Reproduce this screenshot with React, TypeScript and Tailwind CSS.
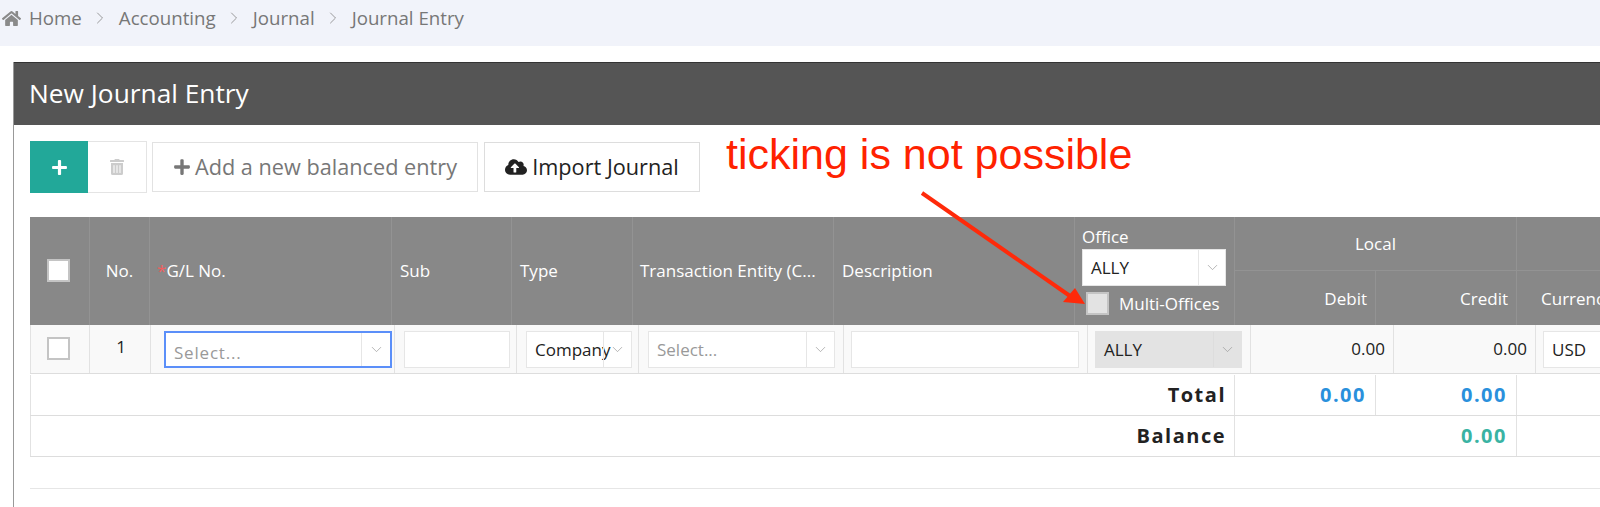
import { ChevronDown, ChevronRight } from "lucide-react";
import { FaCloudUploadAlt, FaHome, FaPlus, FaTrashAlt } from "react-icons/fa";

const Crumb = ({ label, last }: { label: string; last?: boolean }) => (
  <>
    <span>{label}</span>
    {!last && <ChevronRight size={20} strokeWidth={1} className="mx-[8.5px] text-[#888]" />}
  </>
);

const Select = ({
  value,
  placeholder,
  className,
  textClassName = "",
  arrowWidth = "w-[28px]",
}: {
  value?: string;
  placeholder?: string;
  className: string;
  textClassName?: string;
  arrowWidth?: string;
}) => (
  <div className={`flex h-[37px] items-stretch border border-[#e6e6e6] bg-white ${className}`}>
    <div className={`min-w-0 flex-1 overflow-visible whitespace-nowrap pl-[8px] text-[17px] leading-[35px] ${value ? "text-[#222]" : "text-[#999]"} ${textClassName}`}>
      {value ?? placeholder}
    </div>
    <div className={`flex shrink-0 items-center justify-center border-l border-[#e6e6e6] ${arrowWidth}`}>
      <ChevronDown size={17} strokeWidth={1} className="text-[#999]" />
    </div>
  </div>
);

const Checkbox = ({ className }: { className: string }) => (
  <div className={`h-[23px] w-[23px] border-2 border-[#c4c4c4] ${className}`} />
);

const App = () => {
  return (
    <div className="relative h-[507px] w-[1600px] overflow-hidden bg-white font-['Open_Sans',sans-serif]">
      <div className="flex h-[46px] items-center bg-[#f1f3fa] pb-[10px] text-[18.7px] leading-[24px] text-[#777]">
        <FaHome size={19} className="ml-[2px] mr-[8px] text-[#8a8a8a]" />
        <Crumb label="Home" />
        <Crumb label="Accounting" />
        <Crumb label="Journal" />
        <Crumb label="Journal Entry" last />
      </div>

      <div className="ml-[13px] mt-[16px] h-[445px] border-l border-[#999]">
        <div className="flex h-[63px] items-center border-t border-[#333] bg-[#555] pl-[15px] text-[26.3px] text-white">
          New Journal Entry
        </div>

        <div className="flex h-[92px] items-start gap-[5px] pl-[16px] pt-[16px]">
          <div className="flex">
            <div className="flex h-[52px] w-[58px] items-center justify-center bg-[#22a899] text-white">
              <FaPlus size={17} />
            </div>
            <div className="flex h-[52px] w-[59px] items-center justify-center border border-l-0 border-[#e4e4e4] text-[#ccc]">
              <FaTrashAlt size={16} />
            </div>
          </div>
          <div className="mt-[1px] flex h-[50px] w-[326px] items-center justify-center border border-[#e2e2e2] text-[21.7px] text-[#777]">
            <FaPlus size={18} className="mr-[4px]" />
            Add a new balanced entry
          </div>
          <div className="ml-px mt-[1px] flex h-[50px] w-[216px] items-center justify-center border border-[#ddd] text-[21.7px] text-[#222]">
            <FaCloudUploadAlt size={22} className="mr-[5px]" />
            Import Journal
          </div>
        </div>

        <div className="ml-[16px] w-[1700px]">
          <div className="flex h-[108px] bg-[#888] text-[17px] text-white">
            <div className="flex w-[60px] shrink-0 items-center border-r border-[#939393] pl-[17px]">
              <Checkbox className="-mt-[2px] bg-white" />
            </div>
            <div className="flex w-[60px] shrink-0 items-center justify-center border-r border-[#939393]">No.</div>
            <div className="flex w-[242px] shrink-0 items-center border-r border-[#939393] pl-[7px]">
              <span className="text-[#f05f5f]">*</span>G/L No.
            </div>
            <div className="flex w-[120px] shrink-0 items-center border-r border-[#939393] pl-[8px]">Sub</div>
            <div className="flex w-[121px] shrink-0 items-center border-r border-[#939393] pl-[8px]">Type</div>
            <div className="flex w-[201px] shrink-0 items-center border-r border-[#939393] pl-[7px]">Transaction Entity (C...</div>
            <div className="flex w-[241px] shrink-0 items-center border-r border-[#939393] pl-[8px]">Description</div>
            <div className="w-[160px] shrink-0 border-r border-[#939393] pl-[7px] pt-[9px]">
              <div className="h-[23px] leading-[22px]">Office</div>
              <Select value="ALLY" className="w-[144px] border-[#ddd]" arrowWidth="w-[27px]" />
              <div className="mt-[5px] flex items-center">
                <Checkbox className="ml-[4px] bg-[#e3e3e3]" />
                <span className="ml-[10px]">Multi-Offices</span>
              </div>
            </div>
            <div className="w-[282px] shrink-0 border-r border-[#939393]">
              <div className="flex h-[54px] items-center justify-center border-b border-[#939393] pt-[1px]">Local</div>
              <div className="flex h-[54px]">
                <div className="w-[141px] border-r border-[#939393] pr-[8px] pt-[15px] text-right">Debit</div>
                <div className="w-[140px] pr-[8px] pt-[15px] text-right">Credit</div>
              </div>
            </div>
            <div className="flex-1">
              <div className="h-[54px] border-b border-[#939393]" />
              <div className="pl-[24px] pt-[15px]">Currency</div>
            </div>
          </div>

          <div className="flex h-[49px] items-center border-b border-[#ddd] bg-[#f9f9f9] text-[17px] text-[#222]">
            <div className="flex h-full w-[60px] shrink-0 items-center border-l border-r border-[#e2e2e2] pl-[16px]">
              <Checkbox className="-mt-[2px] bg-white" />
            </div>
            <div className="flex h-full w-[61px] shrink-0 items-center justify-center border-r border-[#e2e2e2] pb-[4px] pl-[2px]">1</div>
            <div className="flex h-full w-[244px] shrink-0 items-center border-r border-[#e2e2e2] pl-[13px]">
              <Select
                placeholder="Select..."
                className="w-[228px] border-2 !border-[#5b8ff9]"
                textClassName="mt-[2px] tracking-[0.8px]"
                arrowWidth="w-[29px]"
              />
            </div>
            <div className="flex h-full w-[122px] shrink-0 items-center border-r border-[#e2e2e2] pl-[9px]">
              <div className="h-[37px] w-[106px] border border-[#e6e6e6] bg-white" />
            </div>
            <div className="flex h-full w-[122px] shrink-0 items-center border-r border-[#e2e2e2] pl-[9px]">
              <Select value="Company" className="w-[106px]" arrowWidth="w-[28px]" />
            </div>
            <div className="flex h-full w-[205px] shrink-0 items-center border-r border-[#e2e2e2] pl-[9px]">
              <Select placeholder="Select..." className="w-[187px]" />
            </div>
            <div className="flex h-full w-[244px] shrink-0 items-center border-r border-[#e2e2e2] pl-[7px]">
              <div className="h-[37px] w-[228px] border border-[#e6e6e6] bg-white" />
            </div>
            <div className="flex h-full w-[163px] shrink-0 items-center border-r border-[#e2e2e2] pl-[7px]">
              <Select value="ALLY" className="w-[147px] !border-[#e3e3e3] !bg-[#e3e3e3] [&>div]:!border-[#ddd]" />
            </div>
            <div className="flex h-full w-[143px] shrink-0 items-center justify-end border-r border-[#e2e2e2] pr-[8px]">0.00</div>
            <div className="flex h-full w-[142px] shrink-0 items-center justify-end border-r border-[#e2e2e2] pr-[8px]">0.00</div>
            <div className="flex h-full flex-1 items-center pl-[7px]">
              <div className="h-[37px] w-[100px] border border-[#e6e6e6] bg-white pl-[8px] leading-[35px]">USD</div>
            </div>
          </div>

          <div className="flex h-[42px] items-center border-b border-[#ddd] pt-[1px] text-[20px] font-bold tracking-[1.5px]">
            <div className="flex h-full w-[1205px] shrink-0 items-center justify-end border-l border-r border-[#e2e2e2] pr-[8px] text-[#222]">Total</div>
            <div className="flex h-full w-[141px] shrink-0 items-center justify-end border-r border-[#e2e2e2] pr-[9px] text-[#2a90dc]">0.00</div>
            <div className="flex h-full w-[141px] shrink-0 items-center justify-end border-r border-[#e2e2e2] pr-[9px] text-[#2a90dc]">0.00</div>
          </div>
          <div className="flex h-[41px] items-center border-b border-[#ddd] text-[20px] font-bold tracking-[1.5px]">
            <div className="flex h-full w-[1205px] shrink-0 items-center justify-end border-l border-r border-[#e2e2e2] pr-[8px] text-[#222]">Balance</div>
            <div className="flex h-full w-[282px] shrink-0 items-center justify-end border-r border-[#e2e2e2] pr-[9px] text-[#3ab3a3]">0.00</div>
          </div>
          <div className="mt-[31px] border-t border-[#e6e6e6]" />
        </div>
      </div>

      {/* annotation drawn over the screenshot */}
      <div className="absolute left-[726px] top-[131px] font-['Liberation_Sans',sans-serif] text-[43px] leading-[46px] text-[#ff2200]">
        ticking is not possible
      </div>
      <svg className="absolute left-[900px] top-[180px]" width="200" height="140" viewBox="0 0 200 140">
        <line x1="22" y1="13" x2="170" y2="116" stroke="#ff2a0a" strokeWidth="4" />
        <polygon points="185,124 163,122 175,108" fill="#ff2a0a" />
      </svg>
    </div>
  );
};

export default App;
